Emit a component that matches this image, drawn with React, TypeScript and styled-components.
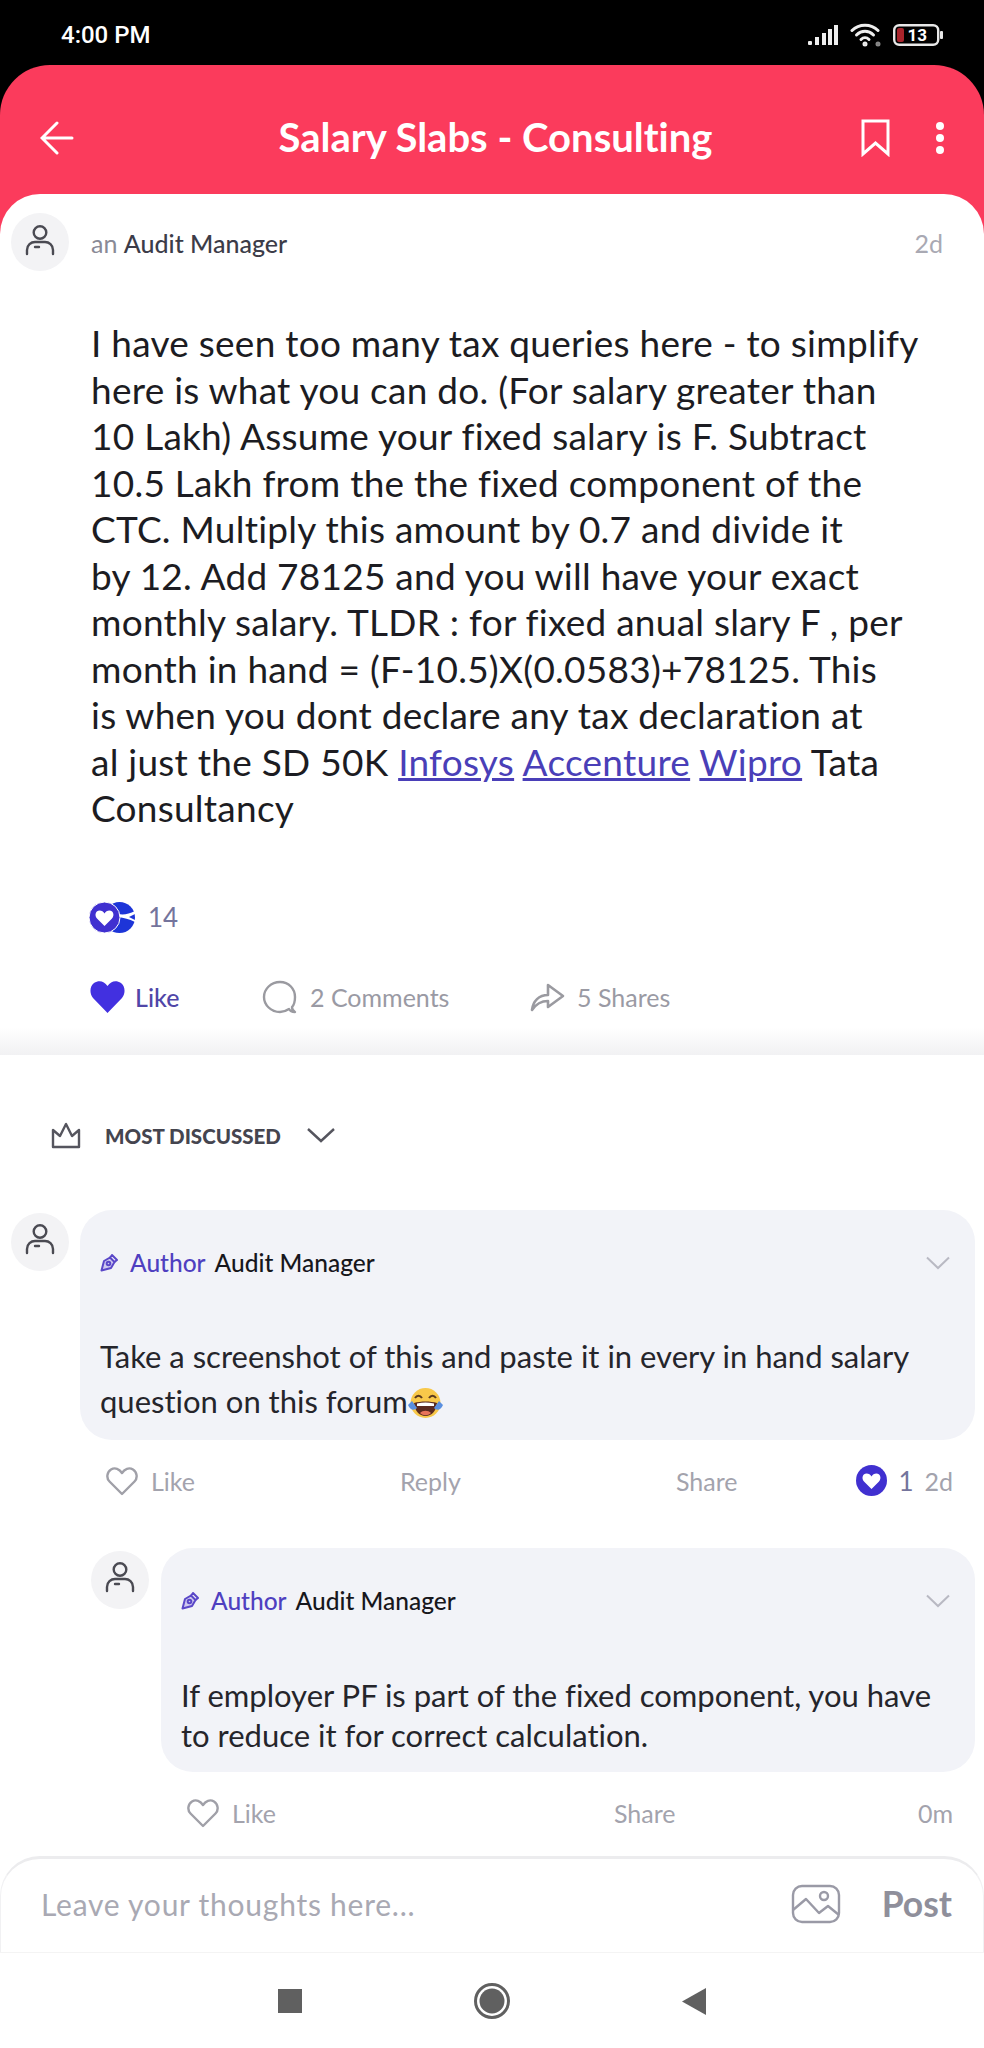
import React from "react";
import styled, { createGlobalStyle } from "styled-components";

const Global = createGlobalStyle`
  html, body { margin: 0; padding: 0; background: #fff; }
  * { box-sizing: border-box; }
`;

const FONT = `"Lato", "Noto Sans", sans-serif`;

const Page = styled.div`
  width: 984px;
  height: 2048px;
  overflow: hidden;
  background: #000;
  font-family: ${FONT};
  font-variant-ligatures: none;
  display: flex;
  flex-direction: column;
`;
const StatusBar = styled.div`
  height: 65px;
  flex: none;
  display: flex;
  align-items: center;
  justify-content: space-between;
  padding: 4px 41px 0 61px;
  color: #fff;
`;
const Clock = styled.span`
  font-family: Roboto, sans-serif;
  font-size: 24px;
  font-weight: 500;
`;
const StatusIcons = styled.div`
  display: flex;
  align-items: center;
  gap: 11px;
`;
const BatteryText = styled.text`
  font-family: Roboto, sans-serif;
  font-size: 17px;
  font-weight: 700;
  fill: #fff;
`;
const RedPanel = styled.div`
  flex: 1;
  background: #fb3b5c;
  border-radius: 50px 50px 0 0;
  display: flex;
  flex-direction: column;
`;
const HeaderBar = styled.div`
  height: 129px;
  flex: none;
  display: grid;
  grid-template-columns: 1fr auto 1fr;
  align-items: center;
  padding: 16px 39px 0 40px;
  color: #fff;
`;
const Title = styled.h1`
  margin: 0 0 2px 6px;
  font-size: 40px;
  font-weight: 700;
  color: #fff;
  font-family: ${FONT};
`;
const HeaderRight = styled.div`
  display: flex;
  justify-content: flex-end;
  align-items: center;
  gap: 45px;
`;
const Sheet = styled.div`
  flex: 1;
  background: #fff;
  border-radius: 40px 40px 0 0;
  display: flex;
  flex-direction: column;
`;
const PostHead = styled.div`
  display: flex;
  align-items: center;
  padding: 19px 41px 0 11px;
  gap: 22px;
`;
const AvatarCircle = styled.div`
  width: 58px;
  height: 58px;
  flex: none;
  border-radius: 50%;
  background: #f3f3f5;
  display: flex;
  align-items: center;
  justify-content: center;
  padding-bottom: 4px;
`;
const Role = styled.span`
  font-size: 25px;
  color: #8a8a96;
  flex: 1;
  margin-top: 2px;
  b {
    font-weight: 500;
    color: #3c3c48;
  }
`;
const TimeAgo = styled.span`
  font-size: 25px;
  margin-top: 2px;
  color: #a9a9b3;
`;
const PostBody = styled.p`
  margin: 49px 0 0;
  padding: 0 40px 0 91px;
  font-size: 37px;
  letter-spacing: 0.25px;
  line-height: 46.5px;
  color: #1c1c22;
  white-space: nowrap;
  a {
    color: #4a3fb8;
    text-decoration: underline;
  }
`;
const ReactionRow = styled.div`
  margin-top: 70px;
  padding-left: 89px;
  height: 31px;
  display: flex;
  align-items: center;
  gap: 13px;
  font-size: 26px;
  color: #74749c;
`;
const PostActions = styled.div`
  margin-top: 47px;
  height: 34px;
  padding-left: 90px;
  display: grid;
  grid-template-columns: 172px 268px auto;
  align-items: center;
`;
const ActionItem = styled.div<{ $gap: number; $active?: boolean }>`
  display: flex;
  align-items: center;
  gap: ${(p) => p.$gap}px;
  font-size: 25px;
  color: ${(p) => (p.$active ? "#5046a8" : "#9a9aa4")};
  font-weight: ${(p) => (p.$active ? 500 : 400)};
`;
const Band = styled.div`
  margin-top: 13px;
  height: 28px;
  background: linear-gradient(#ffffff, #f1f1f3);
`;
const SectionHead = styled.div`
  margin-top: 67px;
  height: 27px;
  padding-left: 51px;
  display: flex;
  align-items: center;
  color: #45454f;
`;
const SectionLabel = styled.span`
  margin: 2px 26px 0 24px;
  font-size: 20.500px;
  font-weight: 900;
  white-space: nowrap;
`;
const CommentRow = styled.div<{ $indent: number; $gap: number; $top: number }>`
  margin-top: ${(p) => p.$top}px;
  padding: 0 9px 0 ${(p) => p.$indent}px;
  display: flex;
  gap: ${(p) => p.$gap}px;
  align-items: flex-start;
`;
const Bubble = styled.div<{ $height: number }>`
  flex: 1;
  height: ${(p) => p.$height}px;
  background: #f2f3f8;
  border-radius: 32px;
  padding: 37px 25px 0 20px;
`;
const Byline = styled.div`
  height: 32px;
  display: flex;
  align-items: center;
  font-size: 24.500px;
  font-weight: 500;
  color: #17171c;
`;
const AuthorTag = styled.span`
  color: #4f3fc0;
  margin: 0 9px 0 12px;
`;
const ChevronSlot = styled.span`
  margin-left: auto;
  display: flex;
`;
const CommentText = styled.p<{ $top: number; $lh: number }>`
  margin: ${(p) => p.$top}px 0 0;
  font-size: 31px;
  line-height: ${(p) => p.$lh}px;
  color: #25252b;
  white-space: nowrap;
`;
const CommentActions = styled.div<{ $cols: string; $left: number; $top: number }>`
  margin-top: ${(p) => p.$top}px;
  height: 32px;
  padding: 0 31px 0 ${(p) => p.$left}px;
  display: grid;
  grid-template-columns: ${(p) => p.$cols};
  align-items: center;
  font-size: 25px;
  color: #a3a3ad;
`;
const LikeGroup = styled.div`
  display: flex;
  align-items: center;
  gap: 13px;
`;
const RightGroup = styled.div`
  display: flex;
  align-items: center;
  justify-content: flex-end;
  gap: 11px;
`;
const Count = styled.span`
  color: #74749c;
  font-size: 26px;
`;
const Composer = styled.div`
  margin-top: 27px;
  height: 96px;
  flex: none;
  border-top: 3px solid #ececee;
  border-left: 1px solid #f1f1f3;
  border-right: 1px solid #f1f1f3;
  border-radius: 40px 40px 0 0;
  box-shadow: 0 1px 0 #f4f4f4;
  display: flex;
  align-items: center;
  padding: 0 31px 3px 40px;
`;
const Placeholder = styled.span`
  flex: 1;
  font-size: 30px;
  color: #a9a9b3;
  letter-spacing: 0.75px;
`;
const PostButton = styled.span`
  margin-left: 41px;
  font-size: 35.500px;
  font-weight: 700;
  color: #8f8f9b;
`;
const NavBar = styled.div`
  flex: 1;
  display: flex;
  align-items: center;
  justify-content: center;
  gap: 172px;
  padding: 3px 1px 0 0;
`;

const Person = () => (
  <svg width="30" height="31" viewBox="0 0 30 31" fill="none" stroke="#4a4a52" strokeWidth="2.400" strokeLinecap="round">
    <circle cx="15" cy="7.500" r="6.300" />
    <path d="M2 29v-4c0-5 4-8 8-8h10c4 0 8 3 8 8v4" />
    <path d="M10 22h4" />
  </svg>
);
const Avatar = () => (
  <AvatarCircle>
    <Person />
  </AvatarCircle>
);
const Pen = () => (
  <svg width="18" height="18" viewBox="0 0 18 18" fill="none" stroke="#5a47c8" strokeWidth="2" strokeLinejoin="round">
    <path d="M1.500 16.500 4 7l6-3.500 4.500 4.500L11 14z" fill="#cfc9ef" />
    <circle cx="8.500" cy="9.500" r="1.800" />
    <path d="M10 3.500 12 1l5 5-2.500 2" />
  </svg>
);
const SmallChevron = () => (
  <svg width="24" height="14" viewBox="0 0 24 14" fill="none" stroke="#b9b9c3" strokeWidth="2">
    <path d="M1 1.500 12 12 23 1.500" />
  </svg>
);
const OutlineHeart = () => (
  <svg width="32" height="30" viewBox="0 0 32 30" fill="none" stroke="#a0a0a8" strokeWidth="2.400" strokeLinejoin="round">
    <path d="M16 28 3.500 15.500C0 12 1 6 5 3.500c4-2.500 8.500-.5 11 3.500 2.500-4 7-6 11-3.500 4 2.500 5 8.500 1.500 12z" />
  </svg>
);
const CircleHeart = () => (
  <svg width="31" height="31" viewBox="0 0 31 31">
    <circle cx="15.500" cy="15.500" r="15.500" fill="#4030d0" />
    <path d="M15.500 24 8 16.500C5 13 7 8.500 10.500 8.500c2.200 0 4 1 5 3 1-2 2.800-3 5-3 3.500 0 5.500 4.500 2.500 8z" fill="#fff" />
  </svg>
);

const comment1 = "Take a screenshot of this and paste it in every in hand salary";

const AvatarOffset = styled.div`
  margin-top: 3px;
  flex: none;
`;
const AvatarSpaced = () => (
  <AvatarOffset>
    <Avatar />
  </AvatarOffset>
);
const EmojiIcon = styled.svg`
  vertical-align: -6px;
`;

export default function App() {
  return (
    <Page>
      <Global />
      <StatusBar>
        <Clock>4:00 PM</Clock>
        <StatusIcons>
          <svg width="31" height="22" viewBox="0 0 31 22" fill="#eee">
            <rect x="0" y="17" width="4" height="4" rx="1" />
            <rect x="7" y="13" width="4" height="8" />
            <rect x="14" y="9" width="4" height="12" />
            <rect x="20" y="5" width="4" height="16" />
            <rect x="26" y="1" width="4" height="20" />
          </svg>
          <svg width="32" height="24" viewBox="0 0 32 24" fill="none" stroke="#eee" strokeWidth="3" strokeLinecap="round">
            <path d="M2 7.500c7-7 19-7 26 0" />
            <path d="M6.500 12c5-5 12-5 17 0" />
            <path d="M11 16.500c2.500-2.500 5.500-2.500 8 0" />
            <circle cx="15" cy="21" r="1" fill="#eee" />
            <circle cx="28" cy="21" r="1" fill="#888" stroke="#888" />
          </svg>
          <svg width="50" height="22" viewBox="0 0 50 22" fill="none">
            <rect x="1.200" y="1.200" width="44" height="19.600" rx="5" stroke="#e8e8e8" strokeWidth="2.400" />
            <rect x="4" y="4" width="7" height="14" rx="2" fill="#a8242c" />
            <BatteryText x="14.500" y="17">13</BatteryText>
            <rect x="47" y="7" width="3" height="8" rx="1" fill="#e8e8e8" />
          </svg>
        </StatusIcons>
      </StatusBar>
      <RedPanel>
        <HeaderBar>
          <svg width="34" height="34" viewBox="0 0 34 34" fill="none" stroke="#fff" strokeWidth="3" strokeLinecap="round">
            <path d="M32 17H3M17 2 2 17l15 15" />
          </svg>
          <Title>Salary Slabs - Consulting</Title>
          <HeaderRight>
            <svg width="29" height="38" viewBox="0 0 29 38" fill="none" stroke="#fff" strokeWidth="3">
              <path d="M2 2h25v33L14.500 24 2 35z" />
            </svg>
            <svg width="10" height="34" viewBox="0 0 10 34" fill="#fff">
              <circle cx="5" cy="5" r="4" />
              <circle cx="5" cy="17" r="4" />
              <circle cx="5" cy="29" r="4" />
            </svg>
          </HeaderRight>
        </HeaderBar>
        <Sheet>
          <PostHead>
            <Avatar />
            <Role>
              an <b>Audit Manager</b>
            </Role>
            <TimeAgo>2d</TimeAgo>
          </PostHead>
          <PostBody>
            I have seen too many tax queries here - to simplify
            <br />
            here is what you can do. (For salary greater than
            <br />
            10 Lakh) Assume your fixed salary is F. Subtract
            <br />
            10.5 Lakh from the the fixed component of the
            <br />
            CTC. Multiply this amount by 0.7 and divide it
            <br />
            by 12. Add 78125 and you will have your exact
            <br />
            monthly salary. TLDR : for fixed anual slary F , per
            <br />
            month in hand = (F-10.5)X(0.0583)+78125. This
            <br />
            is when you dont declare any tax declaration at
            <br />
            al just the SD 50K <a>Infosys</a> <a>Accenture</a> <a>Wipro</a> Tata
            <br />
            Consultancy
          </PostBody>
          <ReactionRow>
            <svg width="46" height="31" viewBox="0 0 46 31">
              <circle cx="30.500" cy="15.500" r="15.500" fill="#1d35d8" />
              <path d="M29 12c6 1 11 0 17-3v3l-6 3 6 3v2c-6-3-11-4-17-5z" fill="#fff" />
              <circle cx="15.500" cy="15.500" r="15.500" fill="#4030d0" stroke="#fff" strokeWidth="1" />
              <path d="M15.500 24 8 16.500C5 13 7 8.500 10.500 8.500c2.200 0 4 1 5 3 1-2 2.800-3 5-3 3.500 0 5.500 4.500 2.500 8z" fill="#fff" />
            </svg>
            <span>14</span>
          </ReactionRow>
          <PostActions>
            <ActionItem $gap={10} $active>
              <svg width="35" height="33" viewBox="0 0 35 33">
                <path d="M17.500 33 3 18C-1 13 0 6 4 3c5-3 10-2 13.500 3C21 1 26 0 31 3c4 3 5 10 1 15z" fill="#4230e0" />
              </svg>
              Like
            </ActionItem>
            <ActionItem $gap={12}>
              <svg width="36" height="34" viewBox="0 0 36 34" fill="none" stroke="#9a9aa0" strokeWidth="2.400" strokeLinejoin="round">
                <path d="M33 32c-2 0-5-1-6-3-3 2-6 3-9 3C9 32 2 25 2 17S9 2 18 2s15 7 15 15c0 4-1 8-3 10 0 2 1 4 3 5z" />
              </svg>
              2 Comments
            </ActionItem>
            <ActionItem $gap={12}>
              <svg width="35" height="30" viewBox="0 0 35 30" fill="none" stroke="#9a9aa0" strokeWidth="2.600" strokeLinejoin="round">
                <path d="M2 28c1-9 7-15 16-15V3l15 11-15 11v-6C11 19 6 22 2 28z" />
              </svg>
              5 Shares
            </ActionItem>
          </PostActions>
          <Band />
          <SectionHead>
            <svg width="30" height="27" viewBox="0 0 30 27" fill="none" stroke="#55555e" strokeWidth="2.400" strokeLinejoin="round">
              <path d="M2 8v17h26V8l-7 6-6-12-6 12z" />
            </svg>
            <SectionLabel>MOST DISCUSSED</SectionLabel>
            <svg width="28" height="16" viewBox="0 0 28 16" fill="none" stroke="#55555e" strokeWidth="2.400">
              <path d="M1 2l13 12L27 2" />
            </svg>
          </SectionHead>
          <CommentRow $indent={11} $gap={11} $top={61}>
            <AvatarSpaced />
            <Bubble $height={230}>
              <Byline>
                <Pen />
                <AuthorTag>Author</AuthorTag>
                Audit Manager
                <ChevronSlot>
                  <SmallChevron />
                </ChevronSlot>
              </Byline>
              <CommentText $top={55} $lh={45}>
                {comment1}
                <br />
                question on this forum
                <EmojiIcon width="35" height="31" viewBox="0 0 35 31">
                  <circle cx="17.500" cy="15" r="15" fill="#f8c84a" />
                  <path d="M6 15c7-2 16-2 23 0-1 8-5 13-11.500 13S7 23 6 15z" fill="#5a2a20" />
                  <path d="M9 15.500c6-1.500 11-1.500 17 0v2.500H9z" fill="#fff" />
                  <path d="M12 25c3-3 8-3 11 0-3 3-8 3-11 0z" fill="#e8735a" />
                  <path d="M0 17c2 5 6 6 9 3l-5-7zM35 17c-2 5-6 6-9 3l5-7z" fill="#5a8fe0" />
                  <path d="M7 10c2-3 5-3 7 0M21 10c2-3 5-3 7 0" fill="none" stroke="#5a3a20" strokeWidth="2" />
                </EmojiIcon>
              </CommentText>
            </Bubble>
          </CommentRow>
          <CommentActions $top={25} $left={106} $cols="294px 276px auto 1fr">
            <LikeGroup>
              <OutlineHeart />
              Like
            </LikeGroup>
            <span>Reply</span>
            <span>Share</span>
            <RightGroup>
              <CircleHeart />
              <Count>1</Count>
              <span>2d</span>
            </RightGroup>
          </CommentActions>
          <CommentRow $indent={91} $gap={12} $top={51}>
            <AvatarSpaced />
            <Bubble $height={224}>
              <Byline>
                <Pen />
                <AuthorTag>Author</AuthorTag>
                Audit Manager
                <ChevronSlot>
                  <SmallChevron />
                </ChevronSlot>
              </Byline>
              <CommentText $top={58} $lh={40}>
                If employer PF is part of the fixed component, you have
                <br />
                to reduce it for correct calculation.
              </CommentText>
            </Bubble>
          </CommentRow>
          <CommentActions $top={25} $left={187} $cols="427px 1fr auto">
            <LikeGroup>
              <OutlineHeart />
              Like
            </LikeGroup>
            <span>Share</span>
            <span>0m</span>
          </CommentActions>
          <Composer>
            <Placeholder>Leave your thoughts here...</Placeholder>
            <svg width="50" height="40" viewBox="0 0 50 40" fill="none" stroke="#9a9aa6" strokeWidth="2.400" strokeLinejoin="round">
              <rect x="2" y="2" width="46" height="36" rx="9" />
              <circle cx="33" cy="12" r="4" />
              <path d="M2 26l13-11 13 14 9-7 11 9" />
            </svg>
            <PostButton>Post</PostButton>
          </Composer>
          <NavBar>
            <svg width="24" height="24" viewBox="0 0 24 24">
              <rect width="24" height="24" fill="#606060" />
            </svg>
            <svg width="36" height="36" viewBox="0 0 36 36">
              <circle cx="18" cy="18" r="16.500" fill="none" stroke="#606060" strokeWidth="3" />
              <circle cx="18" cy="18" r="12.500" fill="#606060" />
            </svg>
            <svg width="24" height="27" viewBox="0 0 24 27">
              <path d="M24 0v27L0 13.500z" fill="#606060" />
            </svg>
          </NavBar>
        </Sheet>
      </RedPanel>
    </Page>
  );
}
